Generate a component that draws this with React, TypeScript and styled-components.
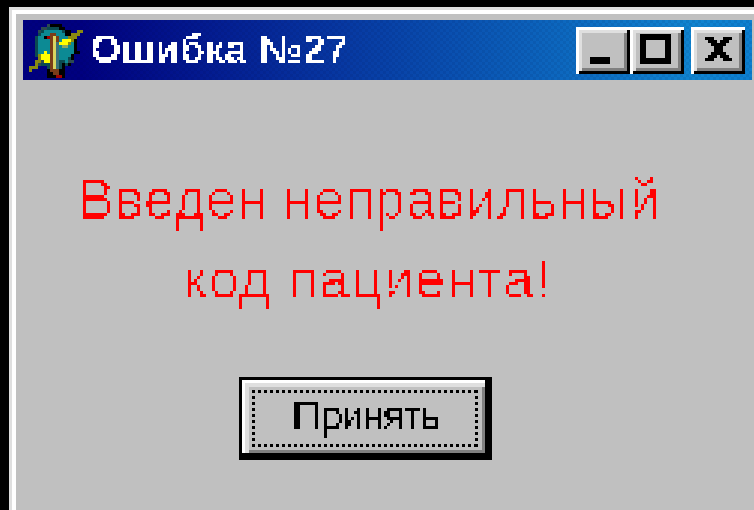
import styled, { createGlobalStyle } from "styled-components";

const GlobalStyle = createGlobalStyle`
  html, body {
    margin: 0;
    height: 100%;
    background: #000;
    overflow: hidden;
  }
`;

// Old Windows dialog frame, the desktop shows as black at the top and left
const Screen = styled.div`
  width: 754px;
  height: 510px;
  padding: 7px 0 0 9px;
  box-sizing: border-box;
  background: #000;
  overflow: hidden;
`;

const Frame = styled.div`
  height: 503px;
  padding: 3px 0 0 3px;
  box-sizing: border-box;
  background: #dfdfdf;
`;

const Surface = styled.div`
  height: 500px;
  padding: 4px 0 0 4px;
  box-sizing: border-box;
  background: #fff;
`;

const Dialog = styled.div`
  height: 496px;
  padding: 6px 2px 0 7px;
  box-sizing: border-box;
  background: #c0c0c0;
  display: flex;
  flex-direction: column;
`;

const TitleBar = styled.div`
  height: 60px;
  flex: none;
  display: flex;
  align-items: flex-start;
  padding: 4px 7px 0 6px;
  box-sizing: border-box;
  background:
    repeating-conic-gradient(rgba(0, 0, 40, 0.07) 0 25%, transparent 0 50%) 0 0 / 6px 6px,
    linear-gradient(90deg, #000080 0%, #000080 8%, #1084d0 92%, #0c7fd0 100%);
`;

const AppIcon = styled.svg`
  width: 54px;
  height: 54px;
  flex: none;
  shape-rendering: crispEdges;
`;

const Title = styled.span`
  margin: 3px 0 0 7px;
  flex: 1;
  font-family: "Liberation Sans", Arial, sans-serif;
  font-weight: 700;
  font-size: 40px;
  line-height: 44px;
  letter-spacing: 0.2px;
  color: #fff;
  white-space: nowrap;
  filter: url(#pixels);
`;

const Controls = styled.div`
  display: flex;
  margin-top: 3px;
`;

const CaptionButton = styled.div<{ $gap?: boolean }>`
  width: 54px;
  height: 47px;
  margin-left: ${(p) => (p.$gap ? "7px" : "0")};
  padding-top: 7px;
  box-sizing: border-box;
  display: flex;
  align-items: flex-start;
  justify-content: center;
  background: #c0c0c0;
  box-shadow:
    inset 3px 3px 0 #fff,
    inset -3px -3px 0 #000,
    inset 6px 6px 0 #dfdfdf,
    inset -6px -6px 0 #808080;
`;

const Glyph = styled.svg`
  width: 36px;
  height: 30px;
  shape-rendering: crispEdges;
`;

const Message = styled.div`
  margin: 79px 0 0 0;
  width: 692px;
  font-family: "Liberation Sans", Arial, sans-serif;
  font-size: 55px;
  line-height: 80px;
  text-align: center;
  color: #f00;
  filter: url(#pixels-thin);
`;

const MessageLine = styled.div<{ $tracking: number; $inset: number }>`
  letter-spacing: ${(p) => p.$tracking}px;
  padding-right: ${(p) => p.$inset}px;
`;

const Actions = styled.div`
  width: 685px;
  margin-top: 58px;
  display: flex;
  justify-content: center;
`;

const AcceptButton = styled.button`
  width: 253px;
  height: 83px;
  padding: 3px 7px 7px 3px;
  box-sizing: border-box;
  border: 0;
  background: #000;
  display: flex;
`;

const ButtonFace = styled.div`
  flex: 1;
  padding: 10px 7px 6px 10px;
  box-sizing: border-box;
  display: flex;
  background: #c0c0c0;
  box-shadow:
    inset 3px 3px 0 #fff,
    inset 7px 7px 0 #dfdfdf,
    inset -3px -3px 0 #808080;
`;

// Focus rectangle made of square dots, one gradient per side
const FocusRing = styled.div`
  flex: 1;
  padding-bottom: 5px;
  box-sizing: border-box;
  display: flex;
  align-items: center;
  justify-content: center;
  background:
    repeating-linear-gradient(90deg, #000 0 3px, transparent 3px 6px) top left / 100% 3px no-repeat,
    repeating-linear-gradient(90deg, #000 0 3px, transparent 3px 6px) bottom left / 100% 3px no-repeat,
    repeating-linear-gradient(0deg, #000 0 3px, transparent 3px 6px) top left / 3px 100% no-repeat,
    repeating-linear-gradient(0deg, #000 0 3px, transparent 3px 6px) top right / 3px 100% no-repeat;
`;

const ButtonLabel = styled.span`
  font-family: "Liberation Sans", Arial, sans-serif;
  font-size: 42px;
  line-height: 46px;
  letter-spacing: -2.4px;
  color: #000;
  filter: url(#pixels-label);
`;

const FilterDefs = styled.svg`
  position: absolute;
  width: 0;
  height: 0;
`;

const ICON_COLORS: Record<string, string> = {
  K: "#000000",
  S: "#2c4a50",
  D: "#0a4a50",
  T: "#0c8a94",
  B: "#7a3c18",
  R: "#a00000",
  L: "#d8d460",
  Y: "#ffff00",
  O: "#8a8a10",
  G: "#8aa860",
  N: "#3a7078",
};

const ICON_ROWS = [
  "......SKKKK.......",
  "....SSDDDDKK......",
  "...SDTTTTTTDKK..OO",
  "...DTTTBBTTTKKOOO.",
  "..DTTKRBLBTTTOOO..",
  "..DTTTTBLBTYYYOK..",
  "..DTTTTBLNYYYOTK..",
  "..DTTTTBLNTGGTTK..",
  "..DTTTTBLNTTTTTK..",
  "..DTTYTBLNTTTTTKK.",
  "..DOYYYBLNTTTTK...",
  "...OYYYBLNTTTDK...",
  "..OOSYYBLNDDTSS...",
  "..OSDDDBLNDKDK....",
  "OOO...DBLNDK......",
  "O.....KBBBKK......",
  "......KKBBKK......",
  "......KKKRRK......",
];

type PixelFilterProps = { id: string; cutoff: string; dx?: number; dy?: number };

// Samples text on a 3px grid so it keeps the chunky bitmap look.
// dx/dy trim the strokes by intersecting the text with a shifted copy of itself,
// cutoff is the alpha table for the hard edge.
const PixelFilter = ({ id, cutoff, dx = 0, dy = 0 }: PixelFilterProps) => (
  <filter id={id} x="0" y="0" width="100%" height="100%" colorInterpolationFilters="sRGB">
    <feFlood x="1" y="1" width="1" height="1" />
    <feComposite width="3" height="3" />
    <feTile result="grid" />
    <feOffset in="SourceGraphic" dx={dx} dy={dy} result="shifted" />
    <feComposite in="SourceGraphic" in2="shifted" operator="in" result="slim" />
    <feComponentTransfer in="slim" result="hard">
      <feFuncA type="discrete" tableValues={cutoff} />
    </feComponentTransfer>
    <feComposite in="hard" in2="grid" operator="in" />
    <feMorphology operator="dilate" radius="1" />
  </filter>
);

const App = () => (
  <>
    <GlobalStyle />
    <FilterDefs aria-hidden="true">
      <PixelFilter id="pixels" cutoff="0 1" />
      <PixelFilter id="pixels-label" cutoff="0 1 1" dx={1} />
      <PixelFilter id="pixels-thin" cutoff="0 0 1 1 1" dx={2} />
    </FilterDefs>
    <Screen>
      <Frame>
        <Surface>
          <Dialog>
            <TitleBar>
              <AppIcon viewBox="0 0 18 18">
                {ICON_ROWS.flatMap((row, y) =>
                  row.split("").map((c, x) =>
                    c === "." ? null : (
                      <rect key={`${x}-${y}`} x={x} y={y} width={1} height={1} fill={ICON_COLORS[c]} />
                    ),
                  ),
                )}
              </AppIcon>
              <Title>Ошибка №27</Title>
              <Controls>
                <CaptionButton>
                  <Glyph viewBox="0 0 36 30">
                    <rect x="5" y="23" width="20" height="7" fill="#000" />
                  </Glyph>
                </CaptionButton>
                <CaptionButton>
                  <Glyph viewBox="0 0 36 30">
                    <rect x="1" y="0" width="31" height="30" fill="#000" />
                    <rect x="7" y="6" width="19" height="18" fill="#c0c0c0" />
                  </Glyph>
                </CaptionButton>
                <CaptionButton $gap>
                  <Glyph viewBox="0 0 36 30">
                    <path
                      d="M5 3h9v3H5z M23 3h9v3h-9z M8 6h9v3H8z M20 6h9v3h-9z M11 9h15v3H11z M14 12h9v6h-9z M11 18h15v3H11z M8 21h9v3H8z M20 21h9v3h-9z M5 24h9v3H5z M23 24h9v3h-9z"
                      fill="#000"
                    />
                  </Glyph>
                </CaptionButton>
              </Controls>
            </TitleBar>
            <Message>
              <MessageLine $tracking={0.3} $inset={2}>
                Введен неправильный
              </MessageLine>
              <MessageLine $tracking={1} $inset={6}>
                код пациента!
              </MessageLine>
            </Message>
            <Actions>
              <AcceptButton type="button">
                <ButtonFace>
                  <FocusRing>
                    <ButtonLabel>Принять</ButtonLabel>
                  </FocusRing>
                </ButtonFace>
              </AcceptButton>
            </Actions>
          </Dialog>
        </Surface>
      </Frame>
    </Screen>
  </>
);

export default App;
